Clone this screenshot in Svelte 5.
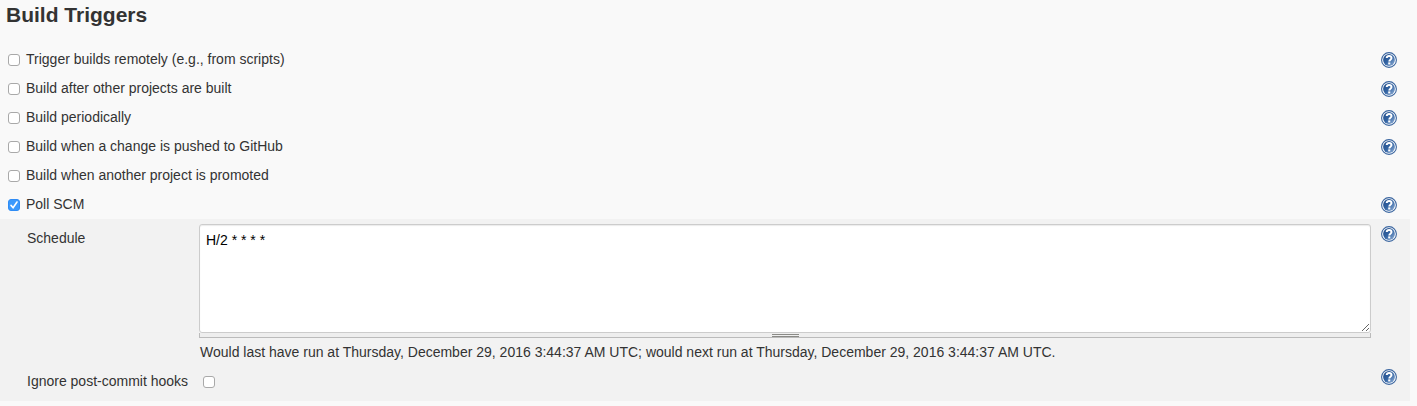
<script lang="ts">
  let triggers = $state([
    { id: 'remote', label: 'Trigger builds remotely (e.g., from scripts)', checked: false, help: true },
    { id: 'upstream', label: 'Build after other projects are built', checked: false, help: true },
    { id: 'periodic', label: 'Build periodically', checked: false, help: true },
    { id: 'github', label: 'Build when a change is pushed to GitHub', checked: false, help: true },
    { id: 'promoted', label: 'Build when another project is promoted', checked: false, help: false },
    { id: 'scm', label: 'Poll SCM', checked: true, help: true }
  ]);
  let schedule = $state('H/2 * * * *');
  let ignoreHooks = $state(false);
</script>

{#snippet help(topic: string)}
  <button type="button" class="help" aria-label={'Help for ' + topic}>
    <svg viewBox="0 0 16 16" width="16" height="16" aria-hidden="true">
      <defs>
        <linearGradient id="disc" x1="0" y1="0" x2="1" y2="1">
          <stop offset="0" stop-color="#204a87" />
          <stop offset="0.5" stop-color="#3465a4" />
          <stop offset="1" stop-color="#9ab6da" />
        </linearGradient>
      </defs>
      <circle cx="8" cy="8" r="7.4" fill="#fff" stroke="#3a659f" stroke-width="1.1" />
      <circle cx="8" cy="8" r="5.9" fill="url(#disc)" />
      <path d="M5.7 6C5.8 4.6 6.8 3.9 8.1 3.9c1.4 0 2.4.8 2.4 2.1 0 1.7-2.2 1.7-2.2 3.5" fill="none" stroke="#fff" stroke-width="2" />
      <rect x="7.2" y="10.4" width="2.1" height="2" fill="#fff" />
    </svg>
  </button>
{/snippet}

<main>
  <h2>Build Triggers</h2>
  {#each triggers as trigger (trigger.id)}
    <div class="row">
      <label><input type="checkbox" bind:checked={trigger.checked} /><span>{trigger.label}</span></label>
      {#if trigger.help}{@render help(trigger.label)}{/if}
    </div>
  {/each}

  <section class="panel">
    <label class="name" for="schedule">Schedule</label>
    <div class="field">
      <textarea id="schedule" spellcheck="false" bind:value={schedule}></textarea>
      <div class="handle"><i></i></div>
      <p>Would last have run at Thursday, December 29, 2016 3:44:37 AM UTC; would next run at Thursday, December 29, 2016 3:44:37 AM UTC.</p>
    </div>
    <div class="aid">{@render help('Schedule')}</div>

    <label class="name hooks" for="hooks">Ignore post-commit hooks</label>
    <div class="check"><input id="hooks" type="checkbox" bind:checked={ignoreHooks} /></div>
    <div class="aid">{@render help('Ignore post-commit hooks')}</div>
  </section>
</main>

<style>
  :global(body) {
    background: #f9f9f9;
  }
  main {
    padding: 0 7px 5px 0;
    color: #333;
    font: 14px/20px Helvetica, "Liberation Sans", Arial, sans-serif;
  }
  h2 {
    margin: 0;
    padding: 3px 0 18px 6px;
    font-size: 21px;
    line-height: 24px;
  }
  .row {
    display: flex;
    align-items: flex-start;
    justify-content: space-between;
    height: 29px;
    padding: 0 13px 0 8px;
  }
  .row label {
    display: flex;
    align-items: center;
    gap: 6px;
    padding-top: 4px;
  }
  .row .help {
    margin-top: 7px;
  }
  input {
    appearance: none;
    display: block;
    width: 12px;
    height: 12px;
    margin: 0;
    border: 1px solid #a9a9a9;
    border-radius: 3px;
    background: #fff;
  }
  .row input {
    margin-top: 2px;
  }
  input:checked {
    border-color: #2f8cf5;
    background: #3b99fc url("data:image/svg+xml,%3Csvg xmlns='http://www.w3.org/2000/svg' viewBox='0 0 10 10'%3E%3Cpath d='M2 5.4 4.1 7.8 8 2' fill='none' stroke='white' stroke-width='1.6' stroke-linecap='round'/%3E%3C/svg%3E") center / 10px 10px;
  }
  .help {
    display: block;
    width: 16px;
    height: 16px;
    padding: 0;
    border: 0;
    background: none;
    cursor: pointer;
  }
  .help svg {
    display: block;
  }
  .panel {
    display: grid;
    grid-template-columns: 172px 1fr 16px;
    padding: 5px 13px 0 27px;
    background: #f2f2f2;
  }
  .name {
    padding-top: 4px;
  }
  .field {
    margin-right: 10px;
  }
  textarea {
    display: block;
    box-sizing: border-box;
    width: 100%;
    height: 109px;
    margin: 0;
    padding: 5px 6px;
    border: 1px solid #ccc;
    border-radius: 3px;
    background: #fff;
    box-shadow: inset 0 1px 1px rgba(0, 0, 0, 0.08);
    color: #000;
    font: inherit;
  }
  .handle {
    display: flex;
    justify-content: center;
    box-sizing: border-box;
    height: 5px;
    border: solid #bbb;
    border-width: 0 1px 1px;
    background: #eee;
  }
  .handle i {
    box-sizing: border-box;
    width: 27px;
    height: 3px;
    margin-top: 1px;
    border: solid #8a8a86;
    border-width: 1px 0;
  }
  p {
    margin: 4px 0 0;
    padding-left: 1px;
  }
  .aid {
    padding-top: 2px;
  }
  .hooks {
    padding: 9px 0 10px;
  }
  .check {
    padding: 14px 0 0 4px;
  }
  .hooks ~ .aid {
    padding-top: 7px;
  }
</style>
